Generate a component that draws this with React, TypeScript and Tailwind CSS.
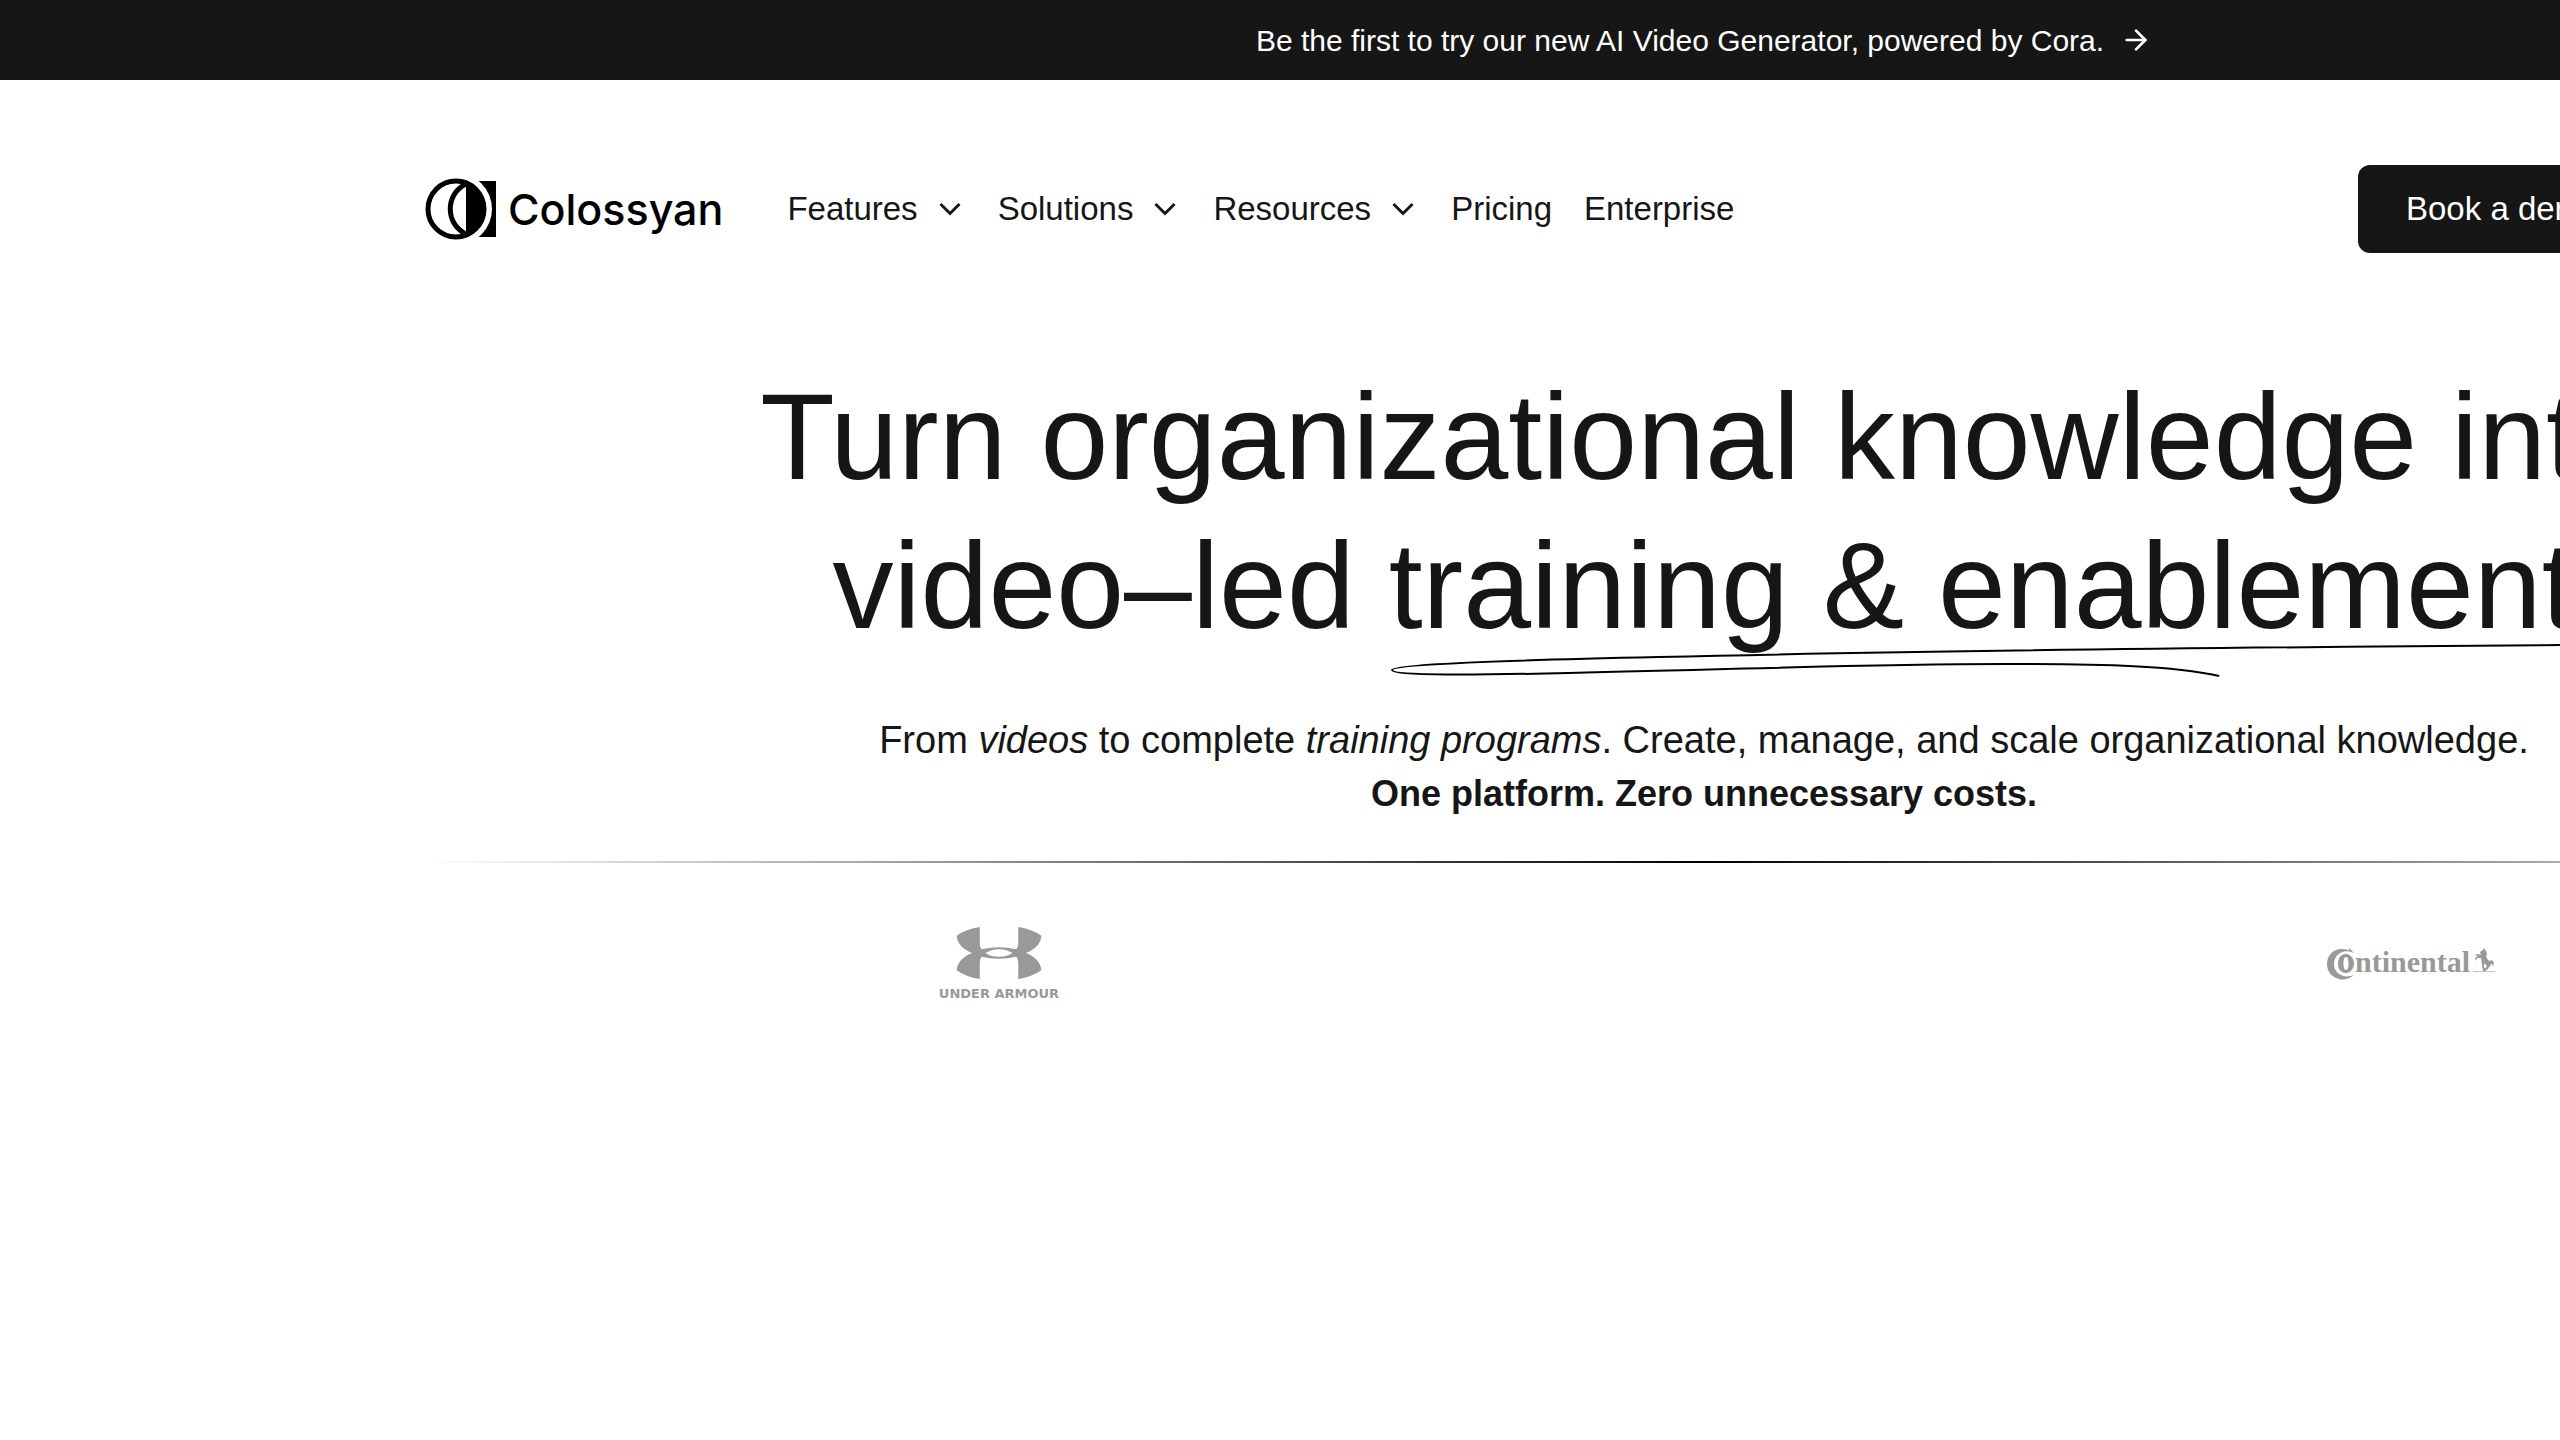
import type { ReactNode } from "react";
import { ArrowRight } from "lucide-react";

const menus = ["Features", "Solutions", "Resources"];
const links = ["Pricing", "Enterprise"];

function ColossyanLogo() {
  return (
    <a href="#" aria-label="Colossyan" className="flex items-center gap-3 text-black">
      <svg className="h-16 w-[72px]" viewBox="0 0 72 64" fill="none">
        <path d="M48 4H72V60H48C70 50 70 14 48 4Z" fill="currentColor" />
        <circle cx="32" cy="32" r="36" fill="#fff" />
        <circle cx="32" cy="32" r="28" stroke="currentColor" strokeWidth="5" />
        <path d="M42 3.5A30.5 30.5 0 0 1 42 60.5Z" fill="currentColor" />
        <path d="M42 7C21 17 21 47 42 57" stroke="currentColor" strokeWidth="5" />
      </svg>
      <span className="font-['Inter',sans-serif] text-[43px] leading-none font-medium">Colossyan</span>
    </a>
  );
}

function Chevron() {
  return (
    <svg className="size-8" viewBox="0 0 32 32" fill="none" stroke="currentColor" strokeWidth="3" aria-hidden="true">
      <path d="M6.500 11L16 20.500L25.500 11" />
    </svg>
  );
}

function UnderArmourLogo() {
  return (
    <div className="flex w-30 flex-col items-center gap-2 text-[#999999]">
      <svg className="h-[52px] w-[90px]" viewBox="0 0 90 54" fill="currentColor" aria-hidden="true">
        <path
          fillRule="evenodd"
          d="M1 9Q11 2 25 0V17Q25 21 27 23Q36 21 45 21T63 23Q65 21 65 17V0Q79 2 89 9Q88 21 73 27Q88 33 89 45Q79 52 65 54V37Q65 33 63 31Q54 33 45 33T27 31Q25 33 25 37V54Q11 52 1 45Q2 33 17 27Q2 21 1 9ZM31 27Q37 31 45 31T59 27Q53 23 45 23T31 27Z"
        />
      </svg>
      <span className="font-['DejaVu_Sans',sans-serif] text-[13px] leading-none font-bold whitespace-nowrap">
        UNDER ARMOUR
      </span>
    </div>
  );
}

function ContinentalLogo() {
  return (
    <svg className="h-8 w-[170px] text-[#999999]" viewBox="0 0 170 32" fill="currentColor" role="img" aria-label="Continental">
      <path d="M22 2L23 0L24 2L27 5C16 0 7 7 7 16C7 26 17 31 27 27C21 32 15 32 12 31C4 29 0 23 0 16C0 7 7 0 16 1Z" />
      <path
        fillRule="evenodd"
        d="M19 6C23 6 27 10 27 15.500C27 21 23 25 19 25C14 25 11 21 11 15.500C11 10 14 6 19 6ZM19 9C17 9 16.500 12 16.500 15.500C16.500 19 17 22 19 22C21 22 21.500 19 21.500 15.500C21.500 12 21 9 19 9Z"
      />
      <text x="28" y="24" fontSize="30" fontWeight="700" fontFamily="Liberation Serif, serif">
        ntinental
      </text>
      <path d="M146 23H168V24H146Z" opacity="0.6" />
      <path d="M147 7L151 6L154 7L153 4L156 2L157 0L159 3L160 6L159 9L162 13L165 12L167 15L166 19L165 15L163 18L160 22H157L160 18L157 15L157 19L159 23H156L155 17L154 10L150 10L149 13L148 10L151 8Z" />
    </svg>
  );
}

function Underlined({ children }: { children: ReactNode }) {
  return (
    <span className="relative inline-block">
      {children}
      <svg
        className="absolute top-[130px] left-0 h-9 w-full"
        viewBox="0 0 1188 36"
        preserveAspectRatio="none"
        fill="none"
        stroke="#000"
        strokeWidth="2"
        aria-hidden="true"
      >
        <path d="M1187 3C900 5 560 8 270 15C130 18 3 22 3 28C3 34 90 33 180 31C370 27 470 22 616 22C720 22 785 24 831 34" />
      </svg>
    </span>
  );
}

export default function App() {
  return (
    <div className="min-h-screen overflow-hidden bg-white font-['Liberation_Sans',Arial,sans-serif] text-[#161616]">
      {/* canvas runs past the right edge of the window */}
      <div className="w-[133.125%]">
        <a href="#" className="flex h-20 items-center justify-center gap-4 bg-[#161616] text-[30px] text-white">
          Be the first to try our new AI Video Generator, powered by Cora.
          <ArrowRight className="size-8" strokeWidth={2} />
        </a>

        <header className="mx-auto mt-[85px] flex h-[88px] max-w-[2560px] items-center whitespace-nowrap">
          <ColossyanLogo />
          <nav className="ml-16 flex items-center gap-8 text-[33px]">
            {menus.map((label) => (
              <button key={label} type="button" className="flex items-center gap-4">
                {label}
                <Chevron />
              </button>
            ))}
            {links.map((label) => (
              <a key={label} href="#">
                {label}
              </a>
            ))}
          </nav>
          <div className="ml-auto flex w-[626px]">
            <button type="button" className="h-[88px] rounded-xl bg-[#161616] px-12 text-[33px] text-white">
              Book a demo
            </button>
          </div>
        </header>

        <main className="mx-auto max-w-[2560px] text-center whitespace-nowrap">
          <h1 className="mt-[110px] text-[122px] leading-[149px]">
            Turn organizational knowledge into
            <br />
            video–led <Underlined>training &amp; enablement</Underlined>
          </h1>
          <div className="mt-[52px] leading-[54px]">
            <p className="text-[38px] leading-[54px]">
              From <em>videos</em> to complete <em>training programs</em>. Create, manage, and scale organizational
              knowledge.
            </p>
            <p className="text-[36px] leading-[54px] font-bold">One platform. Zero unnecessary costs.</p>
          </div>
          <div className="mt-10 h-0.5 bg-linear-to-r from-transparent via-black to-transparent" />
          <div className="mt-16 flex items-center gap-[1268px] pl-[515px]">
            <UnderArmourLogo />
            <ContinentalLogo />
          </div>
        </main>
      </div>
    </div>
  );
}
